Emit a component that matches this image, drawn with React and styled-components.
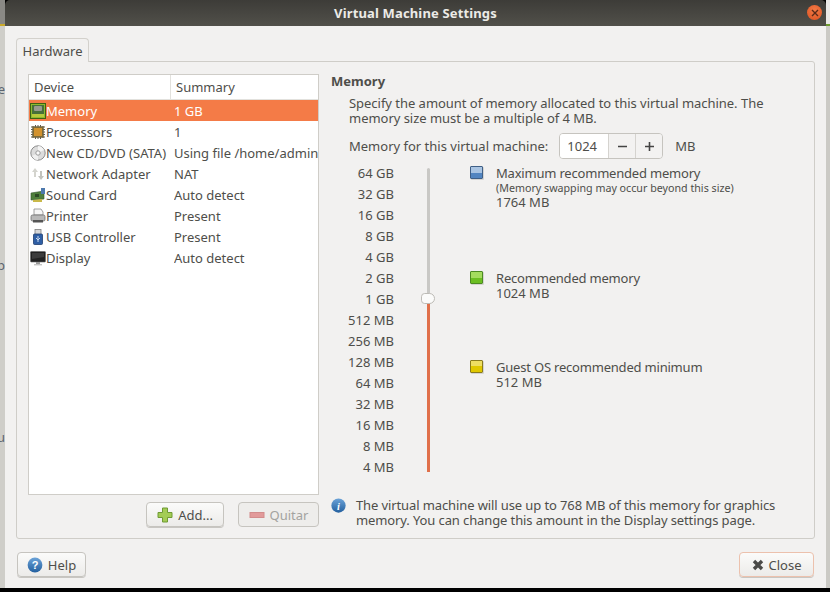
import styled, { createGlobalStyle } from "styled-components";

const devices = [
  { name: "Memory", summary: "1 GB", icon: MemoryIcon, selected: true },
  { name: "Processors", summary: "1", icon: CpuIcon },
  { name: "New CD/DVD (SATA)", summary: "Using file /home/administrator/ubuntu.iso", icon: DiscIcon },
  { name: "Network Adapter", summary: "NAT", icon: NetworkIcon },
  { name: "Sound Card", summary: "Auto detect", icon: SoundIcon },
  { name: "Printer", summary: "Present", icon: PrinterIcon },
  { name: "USB Controller", summary: "Present", icon: UsbIcon },
  { name: "Display", summary: "Auto detect", icon: DisplayIcon },
];

const sizes = [
  "64 GB", "32 GB", "16 GB", "8 GB", "4 GB", "2 GB", "1 GB", "512 MB",
  "256 MB", "128 MB", "64 MB", "32 MB", "16 MB", "8 MB", "4 MB",
];

export default function App() {
  return (
    <Page>
      <GlobalStyle />
      <Desktop>
        <LeftEdge>
          <EdgeGlyph $top="80px">e</EdgeGlyph>
          <EdgeGlyph $top="158px">p</EdgeGlyph>
          <EdgeGlyph $top="154px">u</EdgeGlyph>
        </LeftEdge>
        <Window>
          <TitleBar>
            Virtual Machine Settings
            <CloseDot>
              <svg width="8" height="8" viewBox="0 0 8 8">
                <path d="M1 1l6 6M7 1L1 7" stroke="#5a2a18" strokeWidth="1.4" />
              </svg>
            </CloseDot>
          </TitleBar>
          <Body>
            <Tab>Hardware</Tab>
            <Frame>
              <LeftColumn>
                <DeviceList>
                  <ListHeader>
                    <DeviceHead>Device</DeviceHead>
                    <SummaryHead>Summary</SummaryHead>
                  </ListHeader>
                  {devices.map((d) => (
                    <DeviceRow key={d.name} $selected={d.selected}>
                      <IconCell><d.icon /></IconCell>
                      <DeviceName>{d.name}</DeviceName>
                      <DeviceSummary>{d.summary}</DeviceSummary>
                    </DeviceRow>
                  ))}
                </DeviceList>
                <ListButtons>
                  <Button $width="78px">
                    <PlusIcon /> Add...
                  </Button>
                  <Button $width="81px" disabled>
                    <MinusIcon /> Quitar
                  </Button>
                </ListButtons>
              </LeftColumn>

              <RightColumn>
                <Heading>Memory</Heading>
                <Description>
                  Specify the amount of memory allocated to this virtual machine. The
                  <br />
                  memory size must be a multiple of 4 MB.
                </Description>
                <SpinRow>
                  <span>Memory for this virtual machine:</span>
                  <Spin>
                    <SpinValue>1024</SpinValue>
                    <SpinButton>
                      <svg width="11" height="11" viewBox="0 0 11 11"><path d="M1 5.5h9" stroke="#444" strokeWidth="1.6" /></svg>
                    </SpinButton>
                    <SpinButton>
                      <svg width="11" height="11" viewBox="0 0 11 11"><path d="M1 5.5h9M5.5 1v9" stroke="#444" strokeWidth="1.6" /></svg>
                    </SpinButton>
                  </Spin>
                  <span>MB</span>
                </SpinRow>
                <ScaleArea>
                  <Scale>
                    {sizes.map((s) => (
                      <ScaleLabel key={s}>{s}</ScaleLabel>
                    ))}
                  </Scale>
                  <Slider>
                    <SliderTrack />
                    <SliderFill />
                    <SliderThumb />
                  </Slider>
                  <Legend>
                    <LegendItem>
                      <Swatch $light="#a9c4e2" $color="#5285c0" $border="#3f5f86" />
                      <LegendText>
                        Maximum recommended memory
                        <LegendNote>(Memory swapping may occur beyond this size)</LegendNote>
                        <LegendValue>1764 MB</LegendValue>
                      </LegendText>
                    </LegendItem>
                    <LegendItem $top="60px">
                      <Swatch $light="#a4dc5e" $color="#6cbf22" $border="#4c8a22" />
                      <LegendText>
                        Recommended memory
                        <LegendValue>1024 MB</LegendValue>
                      </LegendText>
                    </LegendItem>
                    <LegendItem $top="58px">
                      <Swatch $light="#eede62" $color="#e0c800" $border="#8a7b1c" />
                      <LegendText>
                        Guest OS recommended minimum
                        <LegendValue>512 MB</LegendValue>
                      </LegendText>
                    </LegendItem>
                  </Legend>
                </ScaleArea>
                <InfoRow>
                  <InfoIcon />
                  <InfoText>
                    The virtual machine will use up to 768 MB of this memory for graphics
                    <br />
                    memory. You can change this amount in the Display settings page.
                  </InfoText>
                </InfoRow>
              </RightColumn>
            </Frame>
            <Footer>
              <Button $width="69px">
                <HelpIcon /> Help
              </Button>
              <Button $width="75px" $accent>
                <CrossIcon /> Close
              </Button>
            </Footer>
          </Body>
        </Window>
        <RightEdge />
      </Desktop>
      <BlackBar />
    </Page>
  );
}

function MemoryIcon() {
  return (
    <svg width="16" height="16" viewBox="0 0 16 16">
      <rect x="0.5" y="0.5" width="15" height="15" fill="#8fb92e" stroke="#3d6312" />
      <rect x="2" y="2" width="12" height="9" fill="#48703a" />
      <rect x="4" y="3" width="8" height="5" rx="1" fill="#9a9a90" />
      <path d="M3 11v3M5 11v3M7 11v3M9 11v3M11 11v3M13 11v3" stroke="#e3d94a" />
    </svg>
  );
}

function CpuIcon() {
  return (
    <svg width="16" height="16" viewBox="0 0 16 16">
      <path d="M3 2v12M5.5 1v14M8 1v14M10.5 1v14M13 2v12M1 3h14M1 5.5h14M1 8h14M1 10.5h14M1 13h14" stroke="#5e5a50" />
      <rect x="2.5" y="2.5" width="11" height="11" fill="#7a6a3a" />
      <rect x="4" y="4" width="8" height="8" fill="#d2922e" />
    </svg>
  );
}

function DiscIcon() {
  return (
    <svg width="16" height="16" viewBox="0 0 16 16">
      <circle cx="8" cy="8" r="7.2" fill="#dcdcdc" stroke="#8c8c8c" />
      <path d="M8 1a7 7 0 0 1 6 4L8 8z" fill="#f4f4f4" />
      <path d="M8 15a7 7 0 0 1-6-4l6-3z" fill="#f0f0f0" />
      <circle cx="8" cy="8" r="2.2" fill="#fafafa" stroke="#9a9a9a" />
    </svg>
  );
}

function NetworkIcon() {
  return (
    <svg width="16" height="16" viewBox="0 0 16 16">
      <path d="M5 2L2 6h2v5h2V6h2z" fill="#d4d4ce" />
      <path d="M11 14l3-4h-2V5h-2v5H8z" fill="#c2c2bc" />
    </svg>
  );
}

function SoundIcon() {
  return (
    <svg width="16" height="16" viewBox="0 0 16 16">
      <path d="M1 6l13-2v8L1 13z" fill="#4f7f3c" stroke="#33552a" strokeWidth="0.6" />
      <path d="M3 13v2h9v-3" fill="#c9b94a" />
      <rect x="5" y="7" width="4" height="3" fill="#2d4a25" />
      <rect x="11" y="1" width="4" height="6" fill="#4d79ad" />
    </svg>
  );
}

function PrinterIcon() {
  return (
    <svg width="16" height="16" viewBox="0 0 16 16">
      <path d="M4 1h7l2 3v3H4z" fill="#f6f6f6" stroke="#8a8a8a" strokeWidth="0.8" />
      <rect x="1" y="7" width="14" height="6" rx="1.5" fill="#b8b8b8" stroke="#6e6e6e" strokeWidth="0.8" />
      <rect x="3" y="12" width="10" height="2.5" fill="#555" />
    </svg>
  );
}

function UsbIcon() {
  return (
    <svg width="16" height="16" viewBox="0 0 16 16">
      <rect x="5" y="0.5" width="6" height="5" fill="#d8d8d8" stroke="#808080" strokeWidth="0.8" />
      <rect x="3.5" y="5" width="9" height="10.5" rx="1" fill="#2f5fa5" stroke="#1f3d70" strokeWidth="0.8" />
      <path d="M8 7v6M6 9l2 2 2-2" stroke="#c8d8ee" fill="none" />
    </svg>
  );
}

function DisplayIcon() {
  return (
    <svg width="16" height="16" viewBox="0 0 16 16">
      <rect x="0.5" y="1.5" width="15" height="10.5" rx="0.8" fill="#222" stroke="#666" strokeWidth="0.6" />
      <path d="M2 3h12v4L2 9z" fill="#3c3c3c" />
      <rect x="6" y="12" width="4" height="2" fill="#9a9a9a" />
      <rect x="4" y="14" width="8" height="1.4" fill="#c4c4c4" />
    </svg>
  );
}

function PlusIcon() {
  return (
    <svg width="16" height="16" viewBox="0 0 16 16">
      <path d="M5.5 1h5v4.5H15v5h-4.5V15h-5v-4.5H1v-5h4.5z" fill="#a3cc55" stroke="#6f9a34" />
    </svg>
  );
}

function MinusIcon() {
  return (
    <svg width="16" height="16" viewBox="0 0 16 16">
      <rect x="1" y="5.5" width="14" height="5" fill="#e29a9a" stroke="#d28c8c" />
    </svg>
  );
}

function HelpIcon() {
  return (
    <svg width="16" height="16" viewBox="0 0 16 16">
      <defs>
        <linearGradient id="helpBlue" x1="0" y1="0" x2="0" y2="1">
          <stop offset="0" stopColor="#6ba3d8" />
          <stop offset="1" stopColor="#24609f" />
        </linearGradient>
      </defs>
      <circle cx="8" cy="8" r="7.4" fill="url(#helpBlue)" />
      <text x="8" y="12" fontSize="11" fontWeight="700" fill="#fff" textAnchor="middle" fontFamily="Liberation Sans, sans-serif">?</text>
    </svg>
  );
}

function CrossIcon() {
  return (
    <svg width="12" height="12" viewBox="0 0 12 12">
      <path d="M2 2l8 8M10 2l-8 8" stroke="#4a4a48" strokeWidth="3.4" />
    </svg>
  );
}

function InfoIcon() {
  return (
    <InfoSvg width="15" height="15" viewBox="0 0 16 16">
      <defs>
        <linearGradient id="infoBlue" x1="0" y1="0" x2="0" y2="1">
          <stop offset="0" stopColor="#6ba3d8" />
          <stop offset="1" stopColor="#24609f" />
        </linearGradient>
      </defs>
      <circle cx="8" cy="8" r="7.6" fill="url(#infoBlue)" />
      <text x="8" y="12.5" fontSize="11" fontWeight="700" fontStyle="italic" fill="#fff" textAnchor="middle" fontFamily="Liberation Serif, serif">i</text>
    </InfoSvg>
  );
}

const GlobalStyle = createGlobalStyle`
  html, body {
    margin: 0;
    padding: 0;
    background: #000;
  }
  body {
    font-family: "Noto Sans", "Open Sans", sans-serif;
    font-size: 13px;
    color: #4e4e4a;
  }
`;

const Page = styled.div`
  width: 830px;
  height: 592px;
  display: flex;
  flex-direction: column;
  overflow: hidden;
`;

const Desktop = styled.div`
  flex: 1;
  display: flex;
  min-height: 0;
`;

const LeftEdge = styled.div`
  width: 5px;
  flex: none;
  display: flex;
  flex-direction: column;
  overflow: hidden;
  background: linear-gradient(#8a8985 0 24px, #c9a92a 24px 26px, #cfcec9 26px);
`;

const EdgeGlyph = styled.div`
  height: 18px;
  margin-top: ${({ $top }) => $top};
  flex: none;
  display: flex;
  justify-content: flex-end;
  line-height: 18px;
  color: #5c6470;
`;

const RightEdge = styled.div`
  width: 4px;
  flex: none;
  background: linear-gradient(#e9e9e7 0 24px, #6d9a2e 24px 26px, #cbcac5 26px);
`;

const Window = styled.div`
  flex: 1;
  display: flex;
  flex-direction: column;
  min-width: 0;
`;

const TitleBar = styled.div`
  position: relative;
  height: 26px;
  flex: none;
  display: flex;
  align-items: center;
  justify-content: center;
  background: linear-gradient(#3d3c38, #51504a);
  border-radius: 5px 5px 0 0;
  color: #ecebe7;
  font-weight: 700;
  font-size: 13px;
  letter-spacing: 0.15px;
`;

const CloseDot = styled.div`
  position: absolute;
  right: 4px;
  top: 5px;
  width: 15px;
  height: 15px;
  border-radius: 50%;
  background: radial-gradient(circle at 50% 35%, #f37a46, #db5120);
  display: flex;
  align-items: center;
  justify-content: center;
`;

const Body = styled.div`
  flex: 1;
  display: flex;
  flex-direction: column;
  background: #f2f1f0;
  padding: 12px 11px 0 11px;
  min-height: 0;
`;

const Tab = styled.div`
  align-self: flex-start;
  width: 73px;
  height: 24px;
  box-sizing: border-box;
  margin-bottom: -1px;
  position: relative;
  z-index: 1;
  display: flex;
  align-items: center;
  justify-content: center;
  background: #f2f1f0;
  border: 1px solid #d3d1cc;
  border-bottom: none;
  border-radius: 4px 4px 0 0;
`;

const Frame = styled.div`
  height: 478px;
  box-sizing: border-box;
  display: flex;
  border: 1px solid #cfcdc8;
  border-radius: 0 3px 3px 3px;
  padding: 12px 11px 0 11px;
`;

const LeftColumn = styled.div`
  width: 291px;
  flex: none;
  display: flex;
  flex-direction: column;
`;

const DeviceList = styled.div`
  height: 421px;
  box-sizing: border-box;
  background: #fff;
  border: 1px solid #cfcdc8;
  overflow: hidden;
`;

const ListHeader = styled.div`
  display: flex;
  height: 24px;
  border-bottom: 1px solid #e2e1dd;
`;

const DeviceHead = styled.div`
  width: 142px;
  box-sizing: border-box;
  padding: 3px 0 0 5px;
  border-right: 1px solid #e2e1dd;
`;

const SummaryHead = styled.div`
  padding: 3px 0 0 5px;
`;

const DeviceRow = styled.div`
  display: flex;
  align-items: center;
  height: 21px;
  white-space: nowrap;
  background: ${({ $selected }) => ($selected ? "#f47b47" : "transparent")};
  color: ${({ $selected }) => ($selected ? "#fff" : "inherit")};
`;

const IconCell = styled.div`
  width: 16px;
  padding-left: 1px;
  flex: none;
  display: flex;
  align-items: center;
`;

const DeviceName = styled.div`
  width: 128px;
  flex: none;
`;

const DeviceSummary = styled.div`
  overflow: hidden;
`;

const ListButtons = styled.div`
  display: flex;
  justify-content: flex-end;
  gap: 14px;
  margin-top: 7px;
`;

const Button = styled.button`
  width: ${({ $width }) => $width};
  height: 25px;
  box-sizing: border-box;
  display: flex;
  align-items: center;
  justify-content: center;
  gap: 5px;
  padding: 0;
  font: inherit;
  color: ${({ disabled }) => (disabled ? "#a3a3a0" : "inherit")};
  background: ${({ disabled }) => (disabled ? "#eeedeb" : "linear-gradient(#fbfbfa, #ecebe9)")};
  border: 1px solid ${({ $accent }) => ($accent ? "#ecc1ad" : "#c6c4bf")};
  border-radius: 4px;
  box-shadow: ${({ disabled }) => (disabled ? "none" : "0 1px 0 #c8c6c2")};
`;

const RightColumn = styled.div`
  flex: 1;
  display: flex;
  flex-direction: column;
  padding-left: 12px;
  min-width: 0;
`;

const Heading = styled.div`
  font-weight: 700;
  line-height: 15px;
`;

const Description = styled.div`
  margin: 7px 0 0 18px;
  line-height: 15px;
  letter-spacing: -0.03px;
  white-space: nowrap;
`;

const SpinRow = styled.div`
  display: flex;
  align-items: center;
  margin: 7px 0 0 18px;
  line-height: 15px;
  white-space: nowrap;
`;

const Spin = styled.div`
  display: flex;
  height: 26px;
  margin: 0 12px 0 11px;
  box-sizing: border-box;
  border: 1px solid #c6c4bf;
  border-radius: 4px;
  overflow: hidden;
`;

const SpinValue = styled.div`
  width: 48px;
  padding-left: 7px;
  box-sizing: border-box;
  background: #fff;
  display: flex;
  align-items: center;
`;

const SpinButton = styled.div`
  width: 26px;
  display: flex;
  align-items: center;
  justify-content: center;
  background: #f3f2f1;
  border-left: 1px solid #d5d3cf;
`;

const ScaleArea = styled.div`
  display: flex;
  margin-top: 4px;
`;

const Scale = styled.div`
  width: 63px;
  display: flex;
  flex-direction: column;
  align-items: flex-end;
`;

const ScaleLabel = styled.div`
  height: 21px;
  line-height: 21px;
  white-space: nowrap;
`;

const Slider = styled.div`
  position: relative;
  width: 10px;
  height: 304px;
  margin: 5px 0 0 30px;
`;

const SliderTrack = styled.div`
  width: 3px;
  height: 100%;
  margin-left: 3px;
  background: #c9c8c5;
  border-radius: 2px;
`;

const SliderFill = styled.div`
  position: absolute;
  left: 3px;
  top: 130px;
  bottom: 0;
  width: 3px;
  background: #e0704a;
`;

const SliderThumb = styled.div`
  position: absolute;
  left: -3px;
  top: 125px;
  width: 14px;
  height: 11px;
  box-sizing: border-box;
  background: #fbfbfa;
  border: 1px solid #bdbbb6;
  border-radius: 4px 6px 6px 4px;
`;

const Legend = styled.div`
  margin: 2px 0 0 36px;
  display: flex;
  flex-direction: column;
`;

const LegendItem = styled.div`
  display: flex;
  margin-top: ${({ $top }) => $top || "0"};
`;

const Swatch = styled.div`
  width: 13px;
  height: 13px;
  box-sizing: border-box;
  margin-top: 1px;
  flex: none;
  background: linear-gradient(${({ $light }) => $light} 0 50%, ${({ $color }) => $color} 50%);
  border: 1px solid ${({ $border }) => $border};
  border-radius: 1px;
  box-shadow: 1px 1px 0 #d5d4d1;
`;

const LegendText = styled.div`
  margin-left: 13px;
  padding-top: 1px;
  line-height: 15px;
  letter-spacing: -0.2px;
  white-space: nowrap;
`;

const LegendNote = styled.div`
  font-size: 10.7px;
  line-height: 14px;
  letter-spacing: 0;
`;

const LegendValue = styled.div`
  letter-spacing: 0;
`;

const InfoRow = styled.div`
  display: flex;
  margin-top: 20px;
`;

const InfoSvg = styled.svg`
  flex: none;
`;

const InfoText = styled.div`
  margin-left: 10px;
  line-height: 15px;
  letter-spacing: -0.11px;
  white-space: nowrap;
`;

const Footer = styled.div`
  display: flex;
  justify-content: space-between;
  margin: 13px 1px 0 1px;
`;

const BlackBar = styled.div`
  height: 4px;
  flex: none;
  background: #000;
`;
